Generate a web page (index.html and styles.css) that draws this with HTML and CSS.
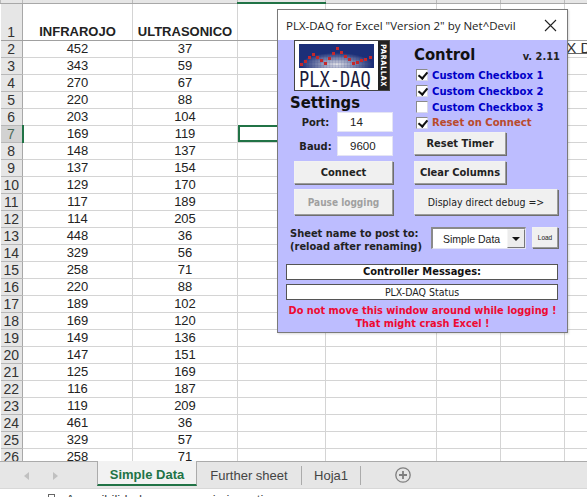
FILE: index.html
```html
<!DOCTYPE html>
<html lang="es">
<head>
    <meta charset="UTF-8">
    <title>PLX-DAQ</title>
    <link rel="stylesheet" href="styles.css">
</head>
<body>
    <div class="sheet">
        <table class="grid">
            <colgroup>
                <col class="c-head"><col class="c-a"><col class="c-b"><col class="c-c"><col class="c-d"><col class="c-e"><col class="c-f"><col class="c-g">
            </colgroup>
            <tbody>
                <tr class="top"><th></th><td></td><td></td><td class="sel-col"></td><td></td><td></td><td></td><td></td></tr>
                <tr class="r1"><th>1</th><td class="title">INFRAROJO</td><td class="title">ULTRASONICO</td><td></td><td></td><td></td><td></td><td></td></tr>
                <tr><th>2</th><td>452</td><td>37</td><td></td><td></td><td></td><td></td><td class="over"><span class="over-text">PLX DAQ</span></td></tr>
                <tr><th>3</th><td>343</td><td>59</td><td></td><td></td><td></td><td></td><td></td></tr>
                <tr><th>4</th><td>270</td><td>67</td><td></td><td></td><td></td><td></td><td></td></tr>
                <tr><th>5</th><td>220</td><td>88</td><td></td><td></td><td></td><td></td><td></td></tr>
                <tr><th>6</th><td>203</td><td>104</td><td></td><td></td><td></td><td></td><td></td></tr>
                <tr><th class="sel-row">7</th><td>169</td><td>119</td><td class="sel-cell"></td><td></td><td></td><td></td><td></td></tr>
                <tr><th>8</th><td>148</td><td>137</td><td></td><td></td><td></td><td></td><td></td></tr>
                <tr><th>9</th><td>137</td><td>154</td><td></td><td></td><td></td><td></td><td></td></tr>
                <tr><th>10</th><td>129</td><td>170</td><td></td><td></td><td></td><td></td><td></td></tr>
                <tr><th>11</th><td>117</td><td>189</td><td></td><td></td><td></td><td></td><td></td></tr>
                <tr><th>12</th><td>114</td><td>205</td><td></td><td></td><td></td><td></td><td></td></tr>
                <tr><th>13</th><td>448</td><td>36</td><td></td><td></td><td></td><td></td><td></td></tr>
                <tr><th>14</th><td>329</td><td>56</td><td></td><td></td><td></td><td></td><td></td></tr>
                <tr><th>15</th><td>258</td><td>71</td><td></td><td></td><td></td><td></td><td></td></tr>
                <tr><th>16</th><td>220</td><td>88</td><td></td><td></td><td></td><td></td><td></td></tr>
                <tr><th>17</th><td>189</td><td>102</td><td></td><td></td><td></td><td></td><td></td></tr>
                <tr><th>18</th><td>169</td><td>120</td><td></td><td></td><td></td><td></td><td></td></tr>
                <tr><th>19</th><td>149</td><td>136</td><td></td><td></td><td></td><td></td><td></td></tr>
                <tr><th>20</th><td>147</td><td>151</td><td></td><td></td><td></td><td></td><td></td></tr>
                <tr><th>21</th><td>125</td><td>169</td><td></td><td></td><td></td><td></td><td></td></tr>
                <tr><th>22</th><td>116</td><td>187</td><td></td><td></td><td></td><td></td><td></td></tr>
                <tr><th>23</th><td>119</td><td>209</td><td></td><td></td><td></td><td></td><td></td></tr>
                <tr><th>24</th><td>461</td><td>36</td><td></td><td></td><td></td><td></td><td></td></tr>
                <tr><th>25</th><td>329</td><td>57</td><td></td><td></td><td></td><td></td><td></td></tr>
                <tr><th>26</th><td>258</td><td>71</td><td></td><td></td><td></td><td></td><td></td></tr>
            </tbody>
        </table>
    </div>

    <div class="tabbar">
        <div class="tab-nav">
            <span class="arrow arrow-left"></span>
            <span class="arrow arrow-right"></span>
        </div>
        <div class="tab tab-active">Simple Data</div>
        <div class="tab tab-sep">Further sheet</div>
        <div class="tab tab-sep">Hoja1</div>
        <svg class="tab-add" width="16" height="16" viewBox="0 0 16 16">
            <circle cx="8" cy="8" r="7.2" fill="none" stroke="#7f7f7f" stroke-width="1.3"/>
            <path d="M8 4v8M4 8h8" stroke="#7f7f7f" stroke-width="1.8"/>
        </svg>
    </div>
    <div class="statusbar"><span class="status-icon"></span><span>Accesibilidad: es necesario investigar</span></div>

    <!-- Ventana PLX-DAQ -->
    <div class="dialog">
        <div class="dialog-title">
            <span>PLX-DAQ for Excel "Version 2" by Net^Devil</span>
            <svg width="13" height="13" viewBox="0 0 13 13">
                <path d="M1 1l11 11M12 1L1 12" stroke="#222" stroke-width="1.1" fill="none"/>
            </svg>
        </div>
        <div class="dialog-body">
            <div class="columns">
                <div class="col-left">
                    <div class="logo">
                        <div class="logo-main">
                            <svg class="logo-chart" width="75" height="24" viewBox="0 0 75 24">
                                <defs>
                                    <radialGradient id="glow" cx="50%" cy="85%" r="48%">
                                        <stop offset="0" stop-color="#e2e2e8"/>
                                        <stop offset="1" stop-color="#1c2f78"/>
                                    </radialGradient>
                                    <pattern id="mesh" width="3" height="3" patternUnits="userSpaceOnUse">
                                        <path d="M3 0H0V3" fill="none" stroke="#1c2f78" stroke-opacity="0.35" stroke-width="0.6"/>
                                    </pattern>
                                </defs>
                                <rect width="75" height="24" fill="url(#glow)"/>
                                <rect width="75" height="24" fill="url(#mesh)"/>
                                <path fill="#c4282c" d="M1 19h3v3H1zM5 16h3v3H5zM9 12h3v3H9zM13 9h3v3h-3zM17 12h3v3h-3zM21 15h3v3h-3zM25 18h3v3h-3zM29 13h3v3h-3zM33 8h3v3h-3zM37 3h3v3h-3zM41 7h3v3h-3zM45 11h3v3h-3zM49 14h3v3h-3zM53 18h3v3h-3zM57 17h3v3h-3zM61 15h3v3h-3zM65 14h3v3h-3zM70 12h3v3h-3z"/>
                            </svg>
                            <div class="logo-text">PLX-DAQ</div>
                        </div>
                        <div class="logo-side"><span>PARALLAX</span></div>
                    </div>
                    <h3 class="settings-title">Settings</h3>
                    <div class="field"><label class="field-label">Port:</label><div class="input">14</div></div>
                    <div class="field"><label class="field-label">Baud:</label><div class="input">9600</div></div>
                    <button class="btn btn-connect" type="button">Connect</button>
                    <button class="btn btn-pause" type="button">Pause logging</button>
                </div>
                <div class="col-right">
                    <div class="control-head">
                        <h3 class="control-title">Control</h3>
                        <span class="version">v. 2.11</span>
                    </div>
                    <div class="checks">
                        <div class="check"><span class="box on"></span>Custom Checkbox 1</div>
                        <div class="check"><span class="box on"></span>Custom Checkbox 2</div>
                        <div class="check"><span class="box"></span>Custom Checkbox 3</div>
                        <div class="check check-reset"><span class="box on"></span>Reset on Connect</div>
                    </div>
                    <button class="btn btn-timer" type="button">Reset Timer</button>
                    <button class="btn btn-clear" type="button">Clear Columns</button>
                    <button class="btn btn-debug" type="button">Display direct debug =&gt;</button>
                </div>
            </div>
            <div class="sheet-row">
                <div class="sheet-label">Sheet name to post to:<br>(reload after renaming)</div>
                <div class="combo"><span class="combo-text">Simple Data</span><span class="combo-btn"></span></div>
                <button class="btn btn-load" type="button">Load</button>
            </div>
            <div class="msg msg-head">Controller Messages:</div>
            <div class="msg msg-status">PLX-DAQ Status</div>
            <div class="warning">Do not move this window around while logging !<br>That might crash Excel !</div>
        </div>
    </div>
</body>
</html>
```

FILE: styles.css
```css
* {
    box-sizing: border-box;
}

html, body {
    margin: 0;
    height: 100%;
}

body {
    position: relative;
    overflow: hidden;
    background-color: #fff;
    font-family: "Liberation Sans", Arial, sans-serif;
    color: #222;
}

/* Hoja */
.sheet {
    height: 461px;
    overflow: hidden;
}

.grid {
    border-collapse: collapse;
    table-layout: fixed;
    width: 587px;
}

.c-head { width: 22px; }
.c-a { width: 110px; }
.c-b { width: 105px; }
.c-c { width: 88px; }
.c-d { width: 111px; }
.c-e { width: 64px; }
.c-f { width: 64px; }
.c-g { width: 23px; }

.grid tr {
    height: 17px;
}

.grid td {
    padding: 0;
    height: 17px;
    border: 1px solid #d4d4d4;
    border-top: 0;
    font-size: 13px;
    line-height: 16px;
    text-align: center;
    white-space: nowrap;
    overflow: hidden;
}

.grid th {
    padding: 0;
    border-bottom: 1px solid #b8b8b8;
    border-right: 1px solid #a8a8a8;
    background-color: #e6e6e6;
    font-size: 14px;
    font-weight: normal;
    line-height: 16px;
    color: #333;
}

.grid .top {
    height: 3px;
}

.grid .top td, .grid .top th {
    height: 3px;
    background-color: #e6e6e6;
    border-bottom: 1px solid #a8a8a8;
    border-left: 1px solid #bbb;
    border-right: 1px solid #bbb;
}

.grid .top .sel-col {
    border-bottom: 2px solid #217346;
}

.grid .r1 {
    height: 37px;
}

.grid .r1 td {
    height: 37px;
    vertical-align: bottom;
    border-bottom: 1px solid #a0a0a0;
}

.grid .r1 th {
    vertical-align: bottom;
    border-bottom: 1px solid #a0a0a0;
}

.grid .title {
    font-weight: bold;
    font-size: 13px;
}

.grid .over {
    overflow: visible;
    text-align: left;
    vertical-align: top;
}

.over-text {
    display: block;
    width: 60px;
    margin-left: -17px;
    border-bottom: 1px solid #666;
    font-size: 15px;
    line-height: 12px;
    padding-top: 1px;
    height: 13px;
    color: #333;
}

.grid .sel-row {
    background-color: #d2d2d2;
    border-right: 2px solid #217346;
    color: #4a6a58;
}

.grid .sel-cell {
    outline: 2px solid #217346;
    outline-offset: -2px;
}

/* Pestanas */
.tabbar {
    display: flex;
    align-items: flex-start;
    height: 28px;
    background-color: #e6e6e6;
    border-top: 1px solid #ababab;
    border-bottom: 1px solid #d8d8d8;
    font-size: 13px;
    color: #444;
}

.tab-nav {
    display: flex;
    gap: 24px;
    align-items: center;
    width: 97px;
    height: 27px;
    padding-left: 24px;
}

.arrow {
    width: 0;
    height: 0;
    border-top: 4px solid transparent;
    border-bottom: 4px solid transparent;
}

.arrow-left {
    border-right: 5px solid #c0c0c0;
}

.arrow-right {
    border-left: 5px solid #c0c0c0;
}

.tab {
    display: flex;
    align-items: center;
    justify-content: center;
    white-space: nowrap;
}

.tab-active {
    width: 100px;
    height: 25px;
    margin-top: -1px;
    padding-top: 3px;
    background-color: #f2f2f2;
    border-left: 1px solid #ababab;
    border-right: 1px solid #ababab;
    border-bottom: 2px solid #217346;
    font-weight: bold;
    color: #217346;
}

.tab-sep {
    border-right: 1px solid #ababab;
    height: 19px;
    margin-top: 4px;
}

.tab-sep:nth-child(3) {
    width: 105px;
}

.tab-sep:nth-child(4) {
    width: 59px;
}

.tab-add {
    margin: 5px 0 0 34px;
}

.statusbar {
    display: flex;
    gap: 11px;
    height: 8px;
    overflow: hidden;
    padding: 3px 0 0 48px;
    font-size: 13px;
    line-height: 15px;
    color: #444;
}

.status-icon {
    width: 7px;
    height: 10px;
    margin-top: 2px;
    border: 1px solid #666;
}

/* Ventana */
.dialog {
    position: absolute;
    left: 277px;
    top: 9px;
    width: 291px;
    height: 324px;
    border: 1px solid #7a7a7a;
    background-color: #bdbdff;
    box-shadow: 1px 1px 2px rgba(0, 0, 0, 0.15);
}

.dialog-title {
    display: flex;
    align-items: center;
    justify-content: space-between;
    height: 30px;
    padding: 0 10px 0 8px;
    background-color: #fff;
    font-family: "Open Sans", "Noto Sans", sans-serif;
    font-size: 11.5px;
    color: #222;
    white-space: nowrap;
}

.dialog-body {
    padding: 0 8px;
    font-family: "DejaVu Sans Condensed", "DejaVu Sans", sans-serif;
    font-stretch: condensed;
}

.columns {
    display: flex;
    gap: 20px;
}

.col-left {
    display: flex;
    flex-direction: column;
    flex: none;
    width: 108px;
    padding-left: 8px;
}

.col-right {
    display: flex;
    flex-direction: column;
    align-items: flex-start;
    padding-top: 4px;
    flex: 1;
}

.logo {
    display: flex;
    width: 96px;
    height: 51px;
    border: 1px solid #444;
    background-color: #fff;
}

.logo-main {
    width: 83px;
    padding: 3px 0 0 4px;
}

.logo-chart {
    display: block;
}

.logo-text {
    margin-top: 2px;
    font-family: "DejaVu Sans Mono", monospace;
    font-stretch: normal;
    font-size: 17px;
    line-height: 16px;
    color: #1a1a3a;
    transform: scaleY(1.2);
    transform-origin: top left;
}

.logo-side {
    flex: 1;
    background-color: #222;
    display: flex;
    align-items: center;
    justify-content: center;
    overflow: hidden;
}

.logo-side span {
    writing-mode: vertical-rl;
    font-size: 7.5px;
    font-weight: bold;
    letter-spacing: 0.5px;
    color: #fff;
}

.settings-title, .control-title {
    margin: 0;
    font-size: 16.5px;
    font-weight: bold;
    color: #111;
}

.settings-title {
    height: 21px;
    line-height: 23px;
    margin-left: -4px;
}

.field {
    display: flex;
    align-items: center;
    height: 20px;
    margin-bottom: 4px;
}

.field-label {
    width: 43px;
    text-align: center;
    font-size: 11px;
    font-weight: bold;
    color: #222;
}

.input {
    width: 56px;
    height: 20px;
    background-color: #fff;
    border: 1px solid #e4e4f4;
    font-family: "Liberation Sans", Arial, sans-serif;
    font-stretch: normal;
    font-size: 11.5px;
    line-height: 19px;
    padding-left: 12px;
}

.btn {
    display: block;
    padding: 0;
    border: 1px solid #9b9b9b;
    border-top-color: #f2f2f2;
    border-left-color: #f2f2f2;
    box-shadow: 1px 1px 0 #6e6e6e;
    background-color: #f0f0f0;
    font-family: inherit;
    font-stretch: condensed;
    font-size: 11px;
    color: #222;
}

.btn-connect, .btn-clear {
    height: 23px;
    font-weight: bold;
}

.btn-connect {
    width: 99px;
    margin-top: 1px;
}

.btn-pause {
    width: 99px;
    height: 26px;
    margin-top: 5px;
    font-size: 10px;
    font-weight: bold;
    color: #a0a0a0;
}

.control-head {
    display: flex;
    align-items: baseline;
    justify-content: space-between;
    width: 146px;
}

.control-title {
    line-height: 22px;
}

.version {
    font-size: 11px;
    font-weight: bold;
}

.checks {
    margin-top: 1px;
}

.check {
    display: flex;
    align-items: center;
    gap: 4px;
    height: 16px;
    padding-left: 2px;
    font-size: 11.2px;
    font-weight: bold;
    color: #0000c8;
    white-space: nowrap;
}

.check-reset {
    color: #b94a2c;
    height: 15px;
}

.box {
    position: relative;
    width: 12px;
    height: 12px;
    background-color: #fff;
    border: 1px solid #8a8a8a;
    border-right-color: #d8d8e8;
    border-bottom-color: #d8d8e8;
}

.box.on::after {
    content: "";
    position: absolute;
    left: 3px;
    top: 0;
    width: 4px;
    height: 7px;
    border: solid #111;
    border-width: 0 2px 2px 0;
    transform: rotate(40deg);
}

.btn-timer {
    width: 92px;
    height: 23px;
    margin-top: 2px;
    font-weight: bold;
}

.btn-clear {
    width: 92px;
    margin-top: 6px;
}

.btn-debug {
    width: 144px;
    height: 26px;
    margin-top: 5px;
    font-size: 10.5px;
}

.sheet-row {
    display: flex;
    align-items: flex-start;
    margin-top: 12px;
    padding-left: 4px;
}

.sheet-label {
    width: 141px;
    font-size: 11px;
    font-weight: bold;
    line-height: 13px;
    color: #222;
    white-space: nowrap;
}

.combo {
    display: flex;
    align-items: center;
    justify-content: space-between;
    width: 95px;
    height: 22px;
    background-color: #fff;
    border: 1px solid #e4e4f4;
    border-top: 2px solid #8a8a8a;
    border-left: 2px solid #8a8a8a;
}

.combo-text {
    padding-left: 10px;
    font-family: "Liberation Sans", Arial, sans-serif;
    font-stretch: normal;
    font-size: 10.5px;
}

.combo-btn {
    position: relative;
    width: 18px;
    height: 19px;
    background-color: #ececec;
    border: 1px solid #777;
    border-top-color: #f5f5f5;
    border-left-color: #f5f5f5;
}

.combo-btn::after {
    content: "";
    position: absolute;
    left: 4px;
    top: 7px;
    border-top: 4px solid #111;
    border-left: 4px solid transparent;
    border-right: 4px solid transparent;
}

.btn-load {
    width: 26px;
    height: 21px;
    margin-left: 6px;
    font-family: "Liberation Sans", Arial, sans-serif;
    font-stretch: normal;
    font-size: 6.5px;
}

.msg {
    width: 272px;
    background-color: #fff;
    border: 1px solid #555;
    text-align: center;
}

.msg-head {
    height: 16px;
    margin-top: 11px;
    font-size: 11px;
    font-weight: bold;
    line-height: 14px;
    color: #111;
}

.msg-status {
    height: 16px;
    margin-top: 4px;
    font-size: 10.5px;
    line-height: 14px;
}

.warning {
    margin-top: 4px;
    font-size: 10.9px;
    font-weight: bold;
    line-height: 13px;
    text-align: center;
    color: #ee0a32;
    white-space: nowrap;
}
```
